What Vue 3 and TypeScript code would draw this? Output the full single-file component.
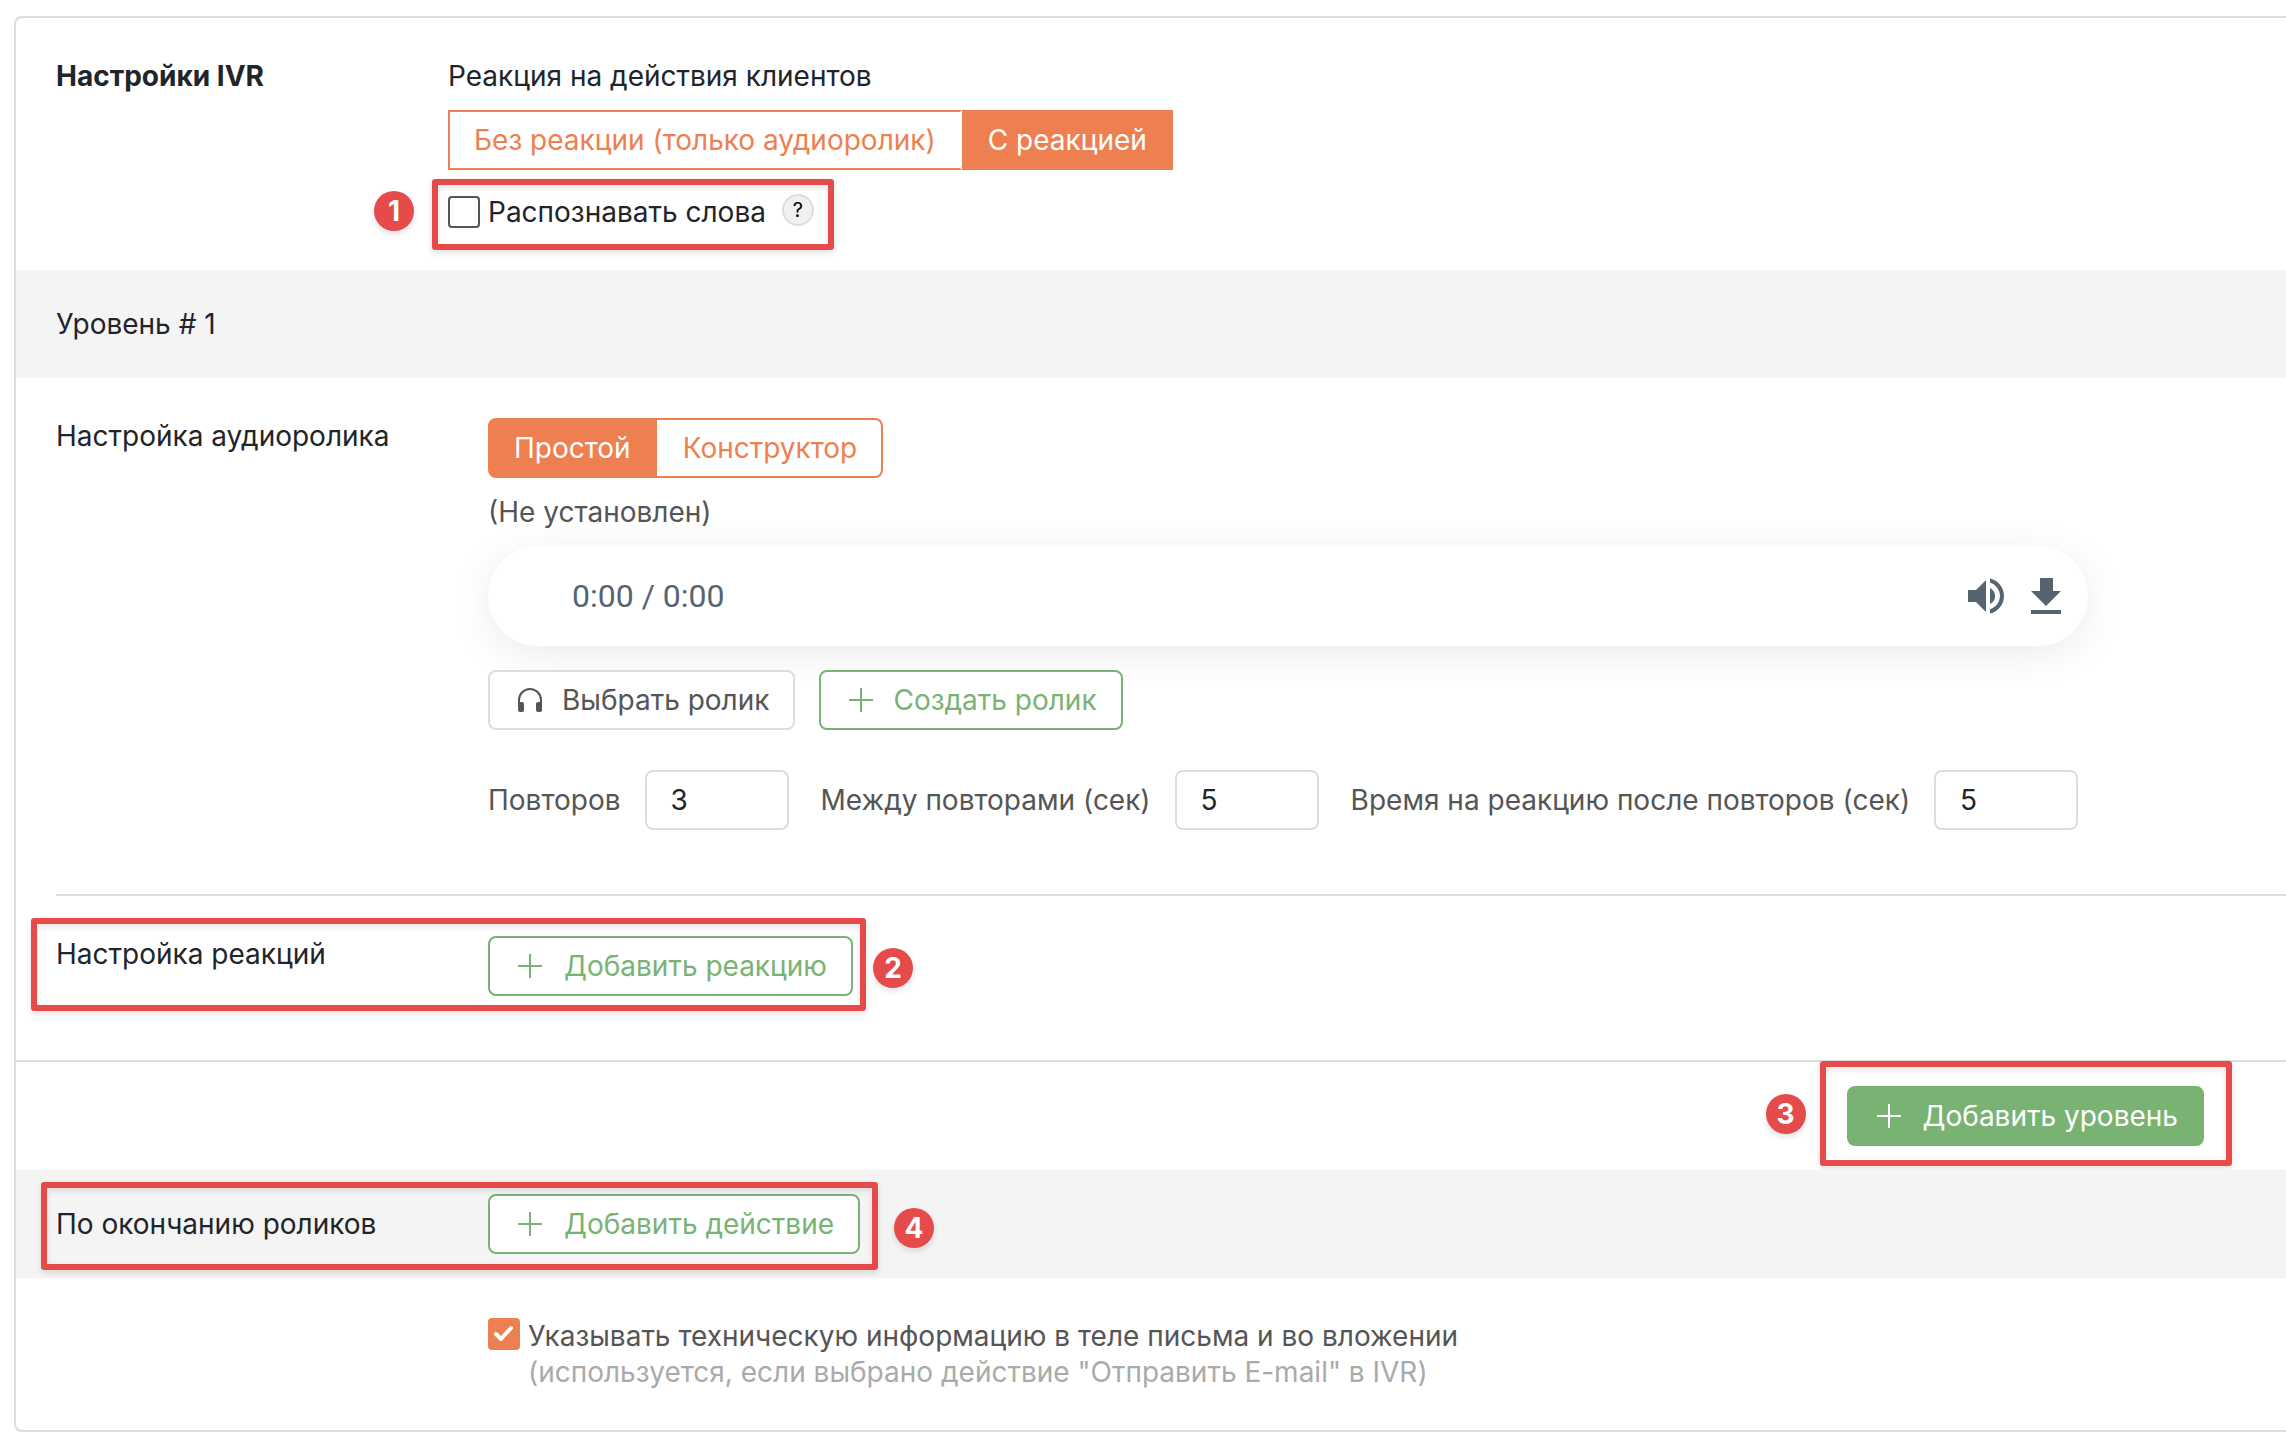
<script setup lang="ts">
import { ref } from 'vue'

type ReactionMode = 'none' | 'react'
type AudioMode = 'simple' | 'builder'

interface TimingField {
  id: string
  label: string
  value: string
}

const reactionMode = ref<ReactionMode>('react')
const audioMode = ref<AudioMode>('simple')
const recognizeWords = ref(false)
const includeTechInfo = ref(true)

const timings = ref<TimingField[]>([
  { id: 'repeats', label: 'Повторов', value: '3' },
  { id: 'between', label: 'Между повторами (сек)', value: '5' },
  { id: 'after', label: 'Время на реакцию после повторов (сек)', value: '5' },
])
</script>

<template>
  <main class="card">
    <section class="row head">
      <h1 class="title">Настройки IVR</h1>
      <div class="controls">
        <p class="caption">Реакция на действия клиентов</p>
        <div class="group square" role="group" aria-label="Реакция на действия клиентов">
          <button type="button" :class="{ active: reactionMode === 'none' }" @click="reactionMode = 'none'">
            Без реакции (только аудиоролик)
          </button>
          <button type="button" :class="{ active: reactionMode === 'react' }" @click="reactionMode = 'react'">
            С реакцией
          </button>
        </div>
        <div class="recognize">
          <input id="recognize" v-model="recognizeWords" class="check" type="checkbox" />
          <label for="recognize">Распознавать слова</label>
          <button type="button" class="help">?</button>
          <span class="frame frame-recognize"></span>
          <span class="badge badge-recognize">1</span>
        </div>
      </div>
    </section>

    <section class="band">
      <h2 class="label">Уровень # 1</h2>
    </section>

    <section class="row level">
      <h3 class="label">Настройка аудиоролика</h3>
      <div class="controls">
        <div class="group" role="group" aria-label="Настройка аудиоролика">
          <button type="button" :class="{ active: audioMode === 'simple' }" @click="audioMode = 'simple'">
            Простой
          </button>
          <button type="button" :class="{ active: audioMode === 'builder' }" @click="audioMode = 'builder'">
            Конструктор
          </button>
        </div>
        <p class="status">(Не установлен)</p>
        <div class="player">
          <span class="time">0:00 / 0:00</span>
          <button type="button" class="player-btn" aria-label="Громкость">
            <svg viewBox="0 0 24 24" width="48" height="48">
              <path d="M3 9v6h4l5 5V4L7 9H3zm13.5 3A4.5 4.5 0 0 0 14 7.97v8.05A4.47 4.47 0 0 0 16.5 12zM14 3.23v2.06a7 7 0 0 1 0 13.42v2.06a9 9 0 0 0 0-17.54z" />
            </svg>
          </button>
          <button type="button" class="player-btn" aria-label="Скачать">
            <svg viewBox="0 0 48 48" width="48" height="48">
              <path d="M18 6h13v13h8L24 34 9 19h9zM9 38h30v4H9z" />
            </svg>
          </button>
        </div>
        <div class="clip-actions">
          <button type="button" class="btn neutral">
            <svg class="icon" viewBox="0 0 32 32" width="32" height="32">
              <path d="M5 20v-4a11 11 0 0 1 22 0v4" fill="none" stroke="currentColor" stroke-width="2" />
              <rect x="4" y="18" width="6" height="10" rx="2" fill="currentColor" />
              <rect x="22" y="18" width="6" height="10" rx="2" fill="currentColor" />
            </svg>
            Выбрать ролик
          </button>
          <button type="button" class="btn green">
            <svg class="icon" viewBox="0 0 32 32" width="32" height="32">
              <path d="M16 4v24M4 16h24" stroke="currentColor" stroke-width="2" />
            </svg>
            Создать ролик
          </button>
        </div>
        <div class="timings">
          <div v-for="field in timings" :key="field.id" class="timing">
            <label :for="field.id">{{ field.label }}</label>
            <input :id="field.id" v-model="field.value" type="text" inputmode="numeric" />
          </div>
        </div>
      </div>
    </section>

    <hr class="rule" />

    <section class="row reactions">
      <h3 class="label">Настройка реакций</h3>
      <div class="controls">
        <button type="button" class="btn green add">
          <svg class="icon" viewBox="0 0 32 32" width="32" height="32">
            <path d="M16 4v24M4 16h24" stroke="currentColor" stroke-width="2" />
          </svg>
          Добавить реакцию
        </button>
      </div>
      <span class="frame frame-reactions"></span>
      <span class="badge badge-reactions">2</span>
    </section>

    <section class="add-level">
      <div class="add-level-box">
        <button type="button" class="btn solid add">
          <svg class="icon" viewBox="0 0 32 32" width="32" height="32">
            <path d="M16 4v24M4 16h24" stroke="currentColor" stroke-width="2" />
          </svg>
          Добавить уровень
        </button>
        <span class="frame frame-level"></span>
        <span class="badge badge-level">3</span>
      </div>
    </section>

    <section class="band finish">
      <h2 class="label">По окончанию роликов</h2>
      <button type="button" class="btn green add">
        <svg class="icon" viewBox="0 0 32 32" width="32" height="32">
          <path d="M16 4v24M4 16h24" stroke="currentColor" stroke-width="2" />
        </svg>
        Добавить действие
      </button>
      <span class="frame frame-finish"></span>
      <span class="badge badge-finish">4</span>
    </section>

    <section class="tech">
      <input id="tech" v-model="includeTechInfo" class="check" type="checkbox" aria-describedby="tech-note" />
      <div>
        <label for="tech">Указывать техническую информацию в теле письма и во вложении</label>
        <p id="tech-note" class="note">(используется, если выбрано действие "Отправить E-mail" в IVR)</p>
      </div>
    </section>
  </main>
</template>

<style>
body {
  margin: 0;
  background: #fff;
}
</style>

<style scoped>
.card {
  --orange: #ee7f50;
  --green: #79b374;
  --red: #e64b4b;
  --line: #ddd;
  box-sizing: border-box;
  margin: 16px 0 14px 14px;
  border: 2px solid var(--line);
  border-right: 0;
  border-radius: 8px 0 0 8px;
  overflow: hidden;
  font-family: Inter, 'Liberation Sans', sans-serif;
  font-size: 28px;
  line-height: 36px;
  color: #212529;
}

h1,
h2,
h3,
p {
  margin: 0;
  font-size: inherit;
  font-weight: 400;
}

button,
input {
  box-sizing: border-box;
  margin: 0;
  font: inherit;
  color: inherit;
}

.row {
  display: flex;
  position: relative;
  padding: 40px 40px 64px;
}

.row.head {
  padding-bottom: 40px;
}

.title,
.label {
  flex: none;
  width: 432px;
}

.title {
  width: 392px;
  font-weight: 700;
}

.controls {
  flex: 1;
  min-width: 0;
}

.band {
  display: flex;
  align-items: center;
  position: relative;
  padding: 36px 40px;
  background: #f4f4f4;
}

.band.finish {
  padding: 24px 40px;
}

.group {
  display: flex;
  width: max-content;
  border-radius: 8px;
}

.group button {
  height: 60px;
  padding: 0 24px;
  border: 2px solid var(--orange);
  background: #fff;
  color: var(--orange);
}

.group button:first-child {
  border-right-color: transparent;
  background-clip: padding-box;
  border-radius: 8px 0 0 8px;
}

.group button:first-child.active {
  border-right-color: var(--orange);
}

.group button:last-child {
  border-radius: 0 8px 8px 0;
}

.group button.active + button {
  border-left-width: 0;
  padding-left: 26px;
}

.group.square button:first-child,
.group.square button:last-child {
  border-radius: 0;
}

.group button.active {
  background: var(--orange);
  color: #fff;
}

.caption {
  margin-bottom: 16px;
}

.recognize {
  display: flex;
  align-items: center;
  position: relative;
  width: max-content;
  margin-top: 24px;
}

.check {
  appearance: none;
  flex: none;
  width: 32px;
  height: 32px;
  margin-right: 8px;
  border: 2px solid #555;
  border-radius: 4px;
  background: #fff;
}

.check:checked {
  border-color: var(--orange);
  background: var(--orange) url("data:image/svg+xml,%3Csvg xmlns='http://www.w3.org/2000/svg' viewBox='0 0 28 28'%3E%3Cpath d='M6 14l5 5L21 8' fill='none' stroke='white' stroke-width='4' stroke-linecap='round' stroke-linejoin='round'/%3E%3C/svg%3E") center / 28px 28px no-repeat;
}

.help {
  width: 32px;
  height: 32px;
  margin: 0 0 4px 16px;
  padding: 0;
  border: 2px solid var(--line);
  border-radius: 50%;
  background: #f0f0f0;
  color: #000;
  font-size: 20px;
  line-height: 28px;
}

.status,
.timing label,
.tech label {
  color: #555;
}

.status {
  margin: 16px 0;
}

.player {
  display: flex;
  align-items: center;
  box-sizing: border-box;
  max-width: 1600px;
  height: 100px;
  padding: 0 18px 0 84px;
  border-radius: 50px;
  background: #fff;
  box-shadow: 0 8px 40px rgba(0, 0, 0, 0.08);
}

.time {
  flex: 1;
  font-family: Roboto, sans-serif;
  font-size: 32px;
  color: #566370;
}

.player-btn {
  display: flex;
  padding: 0;
  border: 0;
  background: none;
  color: #566370;
}

.player-btn + .player-btn {
  margin-left: 12px;
}

.player-btn path {
  fill: currentColor;
}

.clip-actions {
  display: flex;
  gap: 24px;
  margin-top: 24px;
}

.btn {
  display: inline-flex;
  align-items: center;
  gap: 16px;
  height: 60px;
  padding: 0 24px;
  border: 2px solid var(--line);
  border-radius: 8px;
  background: #fff;
  color: #555;
  white-space: nowrap;
}

.btn.add {
  gap: 18px;
}

.btn.green {
  border-color: var(--green);
  color: var(--green);
}

.btn.solid {
  border-color: var(--green);
  background: var(--green);
  color: #fff;
}

.controls > .btn {
  display: flex;
}

.timings {
  display: flex;
  flex-wrap: wrap;
  gap: 32px;
  margin-top: 40px;
}

.timing {
  display: flex;
  align-items: center;
  gap: 24px;
}

.timing input {
  width: 144px;
  height: 60px;
  padding: 0 24px;
  border: 2px solid var(--line);
  border-radius: 8px;
  background: #fff;
}

.rule {
  height: 2px;
  margin: 0 0 0 40px;
  border: 0;
  background: var(--line);
}

.reactions {
  border-bottom: 2px solid var(--line);
}

.add-level {
  display: flex;
  justify-content: flex-end;
  padding: 24px 82px 24px 40px;
}

.add-level-box {
  display: flex;
  position: relative;
}

.tech {
  display: flex;
  padding: 40px 40px 40px 472px;
}

.note {
  color: #aaa;
}

/* Numbered callouts drawn over the form */
.frame {
  position: absolute;
  box-sizing: border-box;
  border: 6px solid var(--red);
  border-radius: 3px;
  box-shadow: 0 3px 6px rgba(0, 0, 0, 0.12), inset 0 3px 6px rgba(0, 0, 0, 0.1);
  pointer-events: none;
}

.badge {
  position: absolute;
  width: 40px;
  height: 40px;
  border-radius: 50%;
  background: var(--red);
  box-shadow: 0 3px 6px rgba(0, 0, 0, 0.12);
  color: #fff;
  font-weight: 700;
  line-height: 40px;
  text-align: center;
}

.frame-recognize {
  inset: -15px -20px -20px -16px;
}

.badge-recognize {
  top: -3px;
  left: -74px;
}

.frame-reactions {
  top: 22px;
  left: 15px;
  width: 835px;
  height: 93px;
}

.badge-reactions {
  top: 52px;
  left: 857px;
}

.frame-level {
  inset: -25px -28px -20px -27px;
}

.badge-level {
  top: 8px;
  left: -81px;
}

.frame-finish {
  top: 12px;
  left: 25px;
  width: 837px;
  height: 88px;
}

.badge-finish {
  top: 38px;
  left: 878px;
}
</style>
